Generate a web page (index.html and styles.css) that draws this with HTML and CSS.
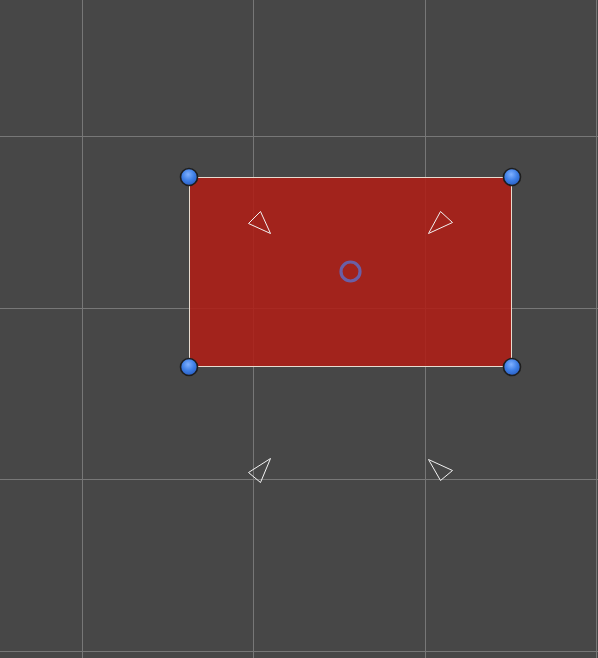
FILE: index.html
```html
<!DOCTYPE html>
<html>
<head>
<meta charset="utf-8">
<link rel="stylesheet" href="styles.css">
</head>
<body>
<div class="scene">
  <svg class="canvas" width="598" height="658" viewBox="0 0 598 658" xmlns="http://www.w3.org/2000/svg">
    <defs>
      <radialGradient id="knob" cx="45%" cy="35%" r="65%">
        <stop offset="0" stop-color="#7fb0ff"/>
        <stop offset="0.55" stop-color="#3f7fe6"/>
        <stop offset="1" stop-color="#2a5fc4"/>
      </radialGradient>
    </defs>
    <g class="grid">
      <line x1="82.5" y1="0" x2="82.5" y2="658"/>
      <line x1="253.5" y1="0" x2="253.5" y2="658"/>
      <line x1="425.5" y1="0" x2="425.5" y2="658"/>
      <line x1="596.5" y1="0" x2="596.5" y2="658"/>
      <line x1="0" y1="136.5" x2="598" y2="136.5"/>
      <line x1="0" y1="308.5" x2="598" y2="308.5"/>
      <line x1="0" y1="479.5" x2="598" y2="479.5"/>
      <line x1="0" y1="651.5" x2="598" y2="651.5"/>
    </g>
    <rect class="rect" x="189.5" y="177.5" width="322" height="189"/>
    <circle class="pivot" cx="350.5" cy="271.5" r="9.5"/>
    <g class="tri">
      <polygon points="248.5,223.5 260.5,211.5 270.5,233.5"/>
      <polygon points="428.5,233.5 440.5,211.5 452.5,222.5"/>
      <polygon points="248.5,472.5 270.5,458.5 260.5,482.5"/>
      <polygon points="428.5,459.5 452.5,470.5 440.5,480.5"/>
    </g>
    <g class="handles">
      <circle cx="189" cy="177" r="8.5"/>
      <circle cx="512" cy="177" r="8.5"/>
      <circle cx="189" cy="367" r="8.5"/>
      <circle cx="512" cy="367" r="8.5"/>
    </g>
  </svg>
</div>
</body>
</html>
```

FILE: styles.css
```css
html, body {
  margin: 0;
  padding: 0;
  background: #474747;
  overflow: hidden;
}
.scene {
  width: 598px;
  height: 658px;
  background: #474747;
}
.canvas {
  display: block;
}
.grid line {
  stroke: #777777;
  stroke-width: 1;
}
.rect {
  fill: rgba(176, 30, 22, 0.87);
  stroke: #e8dcd0;
  stroke-width: 1;
}
.pivot {
  fill: none;
  stroke: #6a5fa6;
  stroke-width: 3.2;
}
.tri polygon {
  fill: none;
  stroke: #f2f2f2;
  stroke-width: 1;
  stroke-linejoin: miter;
}
.handles circle {
  fill: url(#knob);
  stroke: #1e1e1e;
  stroke-width: 1.6;
}
```
